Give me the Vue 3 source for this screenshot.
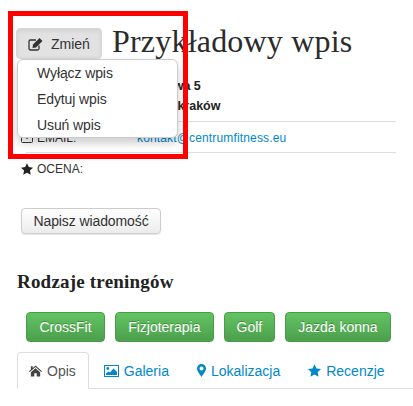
<script setup>
const tags = ['CrossFit', 'Fizjoterapia', 'Golf', 'Jazda konna']
const menu = ['Wyłącz wpis', 'Edytuj wpis', 'Usuń wpis']
const tabs = [
  { name: 'Opis', icon: 'home', active: true },
  { name: 'Galeria', icon: 'image' },
  { name: 'Lokalizacja', icon: 'pin' },
  { name: 'Recenzje', icon: 'star' }
]
</script>

<template>
<div class="page">
  <header class="head">
    <div class="change">
      <button class="btn btn-change">
        <svg class="ico-edit" width="15" height="13" viewBox="0 0 15 13">
          <path d="M11 7.500V10.500a1.500 1.500 0 0 1-1.500 1.500H2.500A1.500 1.500 0 0 1 1 10.500V3.500A1.500 1.500 0 0 1 2.500 2H8" fill="none" stroke="#333" stroke-width="1.300"/>
          <path d="M5 6.500 11.500 0 14.500 3 8 9.500 4.500 10z" fill="#333"/>
        </svg>
        Zmień
      </button>
      <ul class="menu">
        <li v-for="item in menu" :key="item">{{ item }}</li>
      </ul>
    </div>
    <h1>Przykładowy wpis</h1>
  </header>

  <section class="info">
    <div class="address">
      <b class="street">ul. Nowa 5</b>
      <b class="city">30-100 kraków</b>
    </div>
    <div class="row">
      <span class="label">
        <svg width="12" height="11" viewBox="0 0 12 11"><rect x=".5" y=".5" width="11" height="10" rx="1" fill="none" stroke="#333"/><path d="M1 2.500 6 6.500l5-4" fill="none" stroke="#333"/></svg>
        EMAIL:
      </span>
      <a>kontakt@centrumfitness.eu</a>
    </div>
    <div class="row plain">
      <span class="label">
        <svg width="12" height="12" viewBox="1 1 22 21"><path d="M12 1l3.300 7 7.700 1-5.600 5.300 1.500 7.700-6.900-3.800L5.100 22l1.500-7.700L1 9l7.700-1z" fill="#222"/></svg>
        OCENA:
      </span>
    </div>
  </section>

  <button class="btn btn-msg">Napisz wiadomość</button>

  <h3>Rodzaje treningów</h3>
  <div class="tags">
    <button v-for="tag in tags" :key="tag" class="tag">{{ tag }}</button>
  </div>

  <nav class="tabs">
    <a v-for="tab in tabs" :key="tab.name" class="tab" :class="{ active: tab.active }">
      <svg v-if="tab.icon == 'home'" width="13" height="12" viewBox="0 0 14 12"><path d="M7 0 14 6.200l-.8.900L7 1.600.8 7.100 0 6.200 2 4.400V1h2v1.700zM2 7.400 7 3l5 4.400V12H8.300V8.500H5.700V12H2z" fill="#444"/></svg>
      <svg v-else-if="tab.icon == 'image'" width="15" height="12" viewBox="0 0 15 12"><rect x=".5" y=".5" width="14" height="11" fill="none" stroke="#0088cc"/><circle cx="3.800" cy="3.500" r="1.400" fill="#0088cc"/><path d="M2 10V8.500l2.500-2 1.500 1 3.500-4L13 7v3z" fill="#0088cc"/></svg>
      <svg v-else-if="tab.icon == 'pin'" width="9" height="13" viewBox="0 0 9 13"><path fill-rule="evenodd" d="M4.500 0A4.400 4.400 0 0 1 9 4.400C9 7 6 10.500 4.500 13 3 10.500 0 7 0 4.400A4.400 4.400 0 0 1 4.500 0zm0 2.500a2 2 0 1 0 0 4 2 2 0 0 0 0-4z" fill="#0088cc"/></svg>
      <svg v-else width="13" height="13" viewBox="1 1 22 21"><path d="M12 1l3.300 7 7.700 1-5.600 5.300 1.500 7.700-6.900-3.800L5.100 22l1.500-7.700L1 9l7.700-1z" fill="#0088cc"/></svg>
      {{ tab.name }}
    </a>
  </nav>

  <div class="highlight"></div>
</div>
</template>

<style>
body{
  background: #fff;
}
</style>

<style scoped>
*{
  box-sizing: border-box;
  margin: 0;
  padding: 0;
}
.page{
  position: relative;
  width: 413px;
  height: 406px;
  overflow: hidden;
  padding: 23px 17px 0 17px;
  font-family: "Liberation Sans", Arial, sans-serif;
  font-size: 14px;
  line-height: 20px;
  color: #333;
}
.head{
  display: flex;
  align-items: flex-start;
  gap: 10px;
  height: 40px;
}
.change{
  position: relative;
  margin-top: 5px;
}
.btn{
  display: block;
  font-family: inherit;
  font-size: 14px;
  line-height: 20px;
  color: #333;
  border: 1px solid #ccc;
  border-radius: 4px;
  background: linear-gradient(#fff, #e6e6e6);
  box-shadow: 0 1px 1px rgba(0,0,0,.1);
}
.btn-change{
  width: 86px;
  height: 31px;
  margin-left: -1px;
  background: #e2e2e2;
  border-color: #d8d8d8;
  box-shadow: inset 0 2px 4px rgba(0,0,0,.08);
}
.ico-edit{
  margin-right: 4px;
  vertical-align: -2px;
}
.menu{
  position: absolute;
  z-index: 2;
  top: 31px;
  left: 0;
  width: 161px;
  height: 79px;
  list-style: none;
  background: #fff;
  border: 1px solid #ccc;
  border-radius: 6px;
  box-shadow: 0 5px 10px rgba(0,0,0,.2);
}
.menu li{
  height: 26px;
  padding-left: 19px;
  line-height: 26px;
  letter-spacing: -.1px;
}
h1{
  font-family: "Liberation Serif", Georgia, serif;
  font-size: 32px;
  font-weight: 400;
  line-height: 36px;
  letter-spacing: .2px;
  white-space: nowrap;
  color: #2b2b2b;
}
.info{
  margin: 12px 0 0 9px;
  width: 370px;
}
.address{
  display: flex;
  flex-direction: column;
  height: 47px;
  padding: 1px 0 0 111px;
  border-bottom: 1px solid #ddd;
  font-size: 12.5px;
  color: #222;
  white-space: nowrap;
}
.street{
  margin-left: 2px;
}
.city{
  margin-left: -2px;
}
.row{
  display: flex;
  height: 31px;
  padding-top: 1px;
  align-items: center;
  border-bottom: 1px solid #ddd;
  font-size: 12px;
}
.row.plain{
  border: 0;
  padding-top: 0;
}
.label{
  display: flex;
  align-items: center;
  gap: 4px;
  width: 111px;
  margin-left: -5px;
}
.row a{
  margin-left: 5px;
  color: #0088cc;
  letter-spacing: .15px;
}
.btn-msg{
  width: 140px;
  height: 26px;
  margin: 24px 0 0 4px;
  font-size: 14px;
  line-height: 18px;
  letter-spacing: -.1px;
  background: linear-gradient(#fff, #ececec);
}
h3{
  margin-top: 36px;
  font-family: "Liberation Serif", Georgia, serif;
  font-size: 19px;
  font-weight: 700;
  line-height: 24px;
  letter-spacing: .2px;
  color: #222;
}
.tags{
  display: flex;
  gap: 10px;
  margin: 18px 0 0 9px;
}
.tag{
  height: 30px;
  padding: 0 12px;
  font-family: inherit;
  font-size: 14px;
  color: #fff;
  border: 1px solid #4a9a4a;
  border-radius: 4px;
  background: linear-gradient(#62c462, #4c9f4c);
  text-shadow: 0 -1px 0 rgba(0,0,0,.25);
}
.tag:first-child{
  padding: 0 12.5px;
}
.tabs{
  display: flex;
  margin: 10px -17px 0 0;
  height: 37px;
  border-bottom: 1px solid #ddd;
}
.tab{
  display: flex;
  align-items: center;
  gap: 5px;
  height: 37px;
  padding: 0 14px;
  color: #0088cc;
}
.tab.active{
  padding: 0 12px 0 11px;
  margin-right: 1px;
  color: #555;
  background: #fff;
  border: 1px solid #ddd;
  border-bottom-color: #fff;
  border-radius: 4px 4px 0 0;
}
.highlight{
  position: absolute;
  z-index: 3;
  top: 11px;
  left: 8px;
  width: 180px;
  height: 148px;
  border: 5px solid #f00;
  pointer-events: none;
}
</style>
